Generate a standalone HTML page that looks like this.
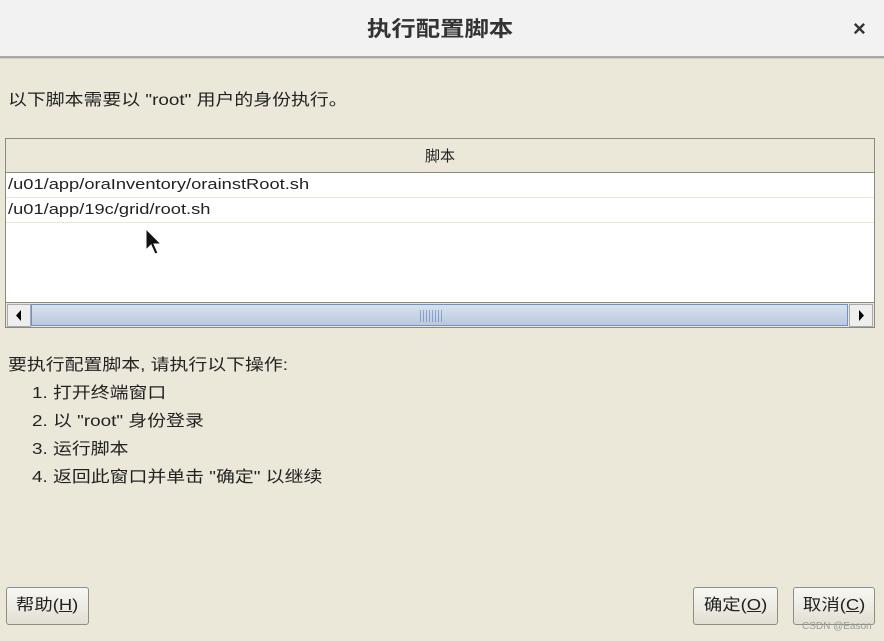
<!DOCTYPE html>
<html><head><meta charset="utf-8"><style>
body{margin:0;width:884px;height:641px;background:#ebe8da;font-family:"Liberation Sans","Noto Sans CJK SC",sans-serif;position:relative;overflow:hidden;color:#222}
.title{position:absolute;left:0;top:0;width:884px;height:56px;background:#f2f2f2;border-bottom:2px solid #a8a8a0;box-shadow:0 1px 0 #d0d0c8}
.title span{position:absolute;left:367px;top:13px;font-size:21px;font-weight:bold;color:#333;transform:scaleX(1.16);transform-origin:left;white-space:nowrap}
.x{position:absolute;left:853px;top:16px;font-size:22px;font-weight:bold;color:#333}
.t{position:absolute;font-size:16px;color:#222;white-space:nowrap;transform:scaleX(1.18);transform-origin:left}
.tbl{position:absolute;left:5px;top:138px;width:868px;height:188px;border:1px solid #8a8a84;background:#fff}
.hd{height:33px;background:#ebe8da;border-bottom:1px solid #8a8a84;text-align:center;font-size:15px;line-height:36px}
.row{height:24px;border-bottom:1px solid #ece8d0;font-size:15px;line-height:24px;padding-left:2px}
.row span{display:inline-block;transform:scaleX(1.22);transform-origin:left}
.sb{position:absolute;left:0;bottom:0;width:868px;height:24px;background:#ebe8da;border-top:1px solid #8a8a84}
.sb .l,.sb .r{position:absolute;top:1px;width:22px;height:21px;background:#eee;border:1px solid #aaa}
.sb .l{left:1px}.sb .r{right:1px}
.thumb{position:absolute;left:25px;right:26px;top:1px;height:20px;background:linear-gradient(#d8e2ee,#b9c9dc);border:1px solid #6d91c8}
.grip{position:absolute;left:388px;top:5px;width:22px;height:12px;background:repeating-linear-gradient(90deg,#5a7fc0 0 1px,transparent 1px 3px);opacity:.6}
.btn{position:absolute;top:587px;height:36px;border:1px solid #8e8e86;border-radius:3px;background:linear-gradient(#f8f8f4,#e2dfd2);font-size:16px;line-height:36px;text-align:center}
.btn span{display:inline-block;transform:scaleX(1.15)}
</style></head><body>
<div class="title"><span>执行配置脚本</span><div class="x">×</div></div>
<div class="t" style="left:8px;top:86px">以下脚本需要以 "root" 用户的身份执行。</div>
<div class="tbl">
<div class="hd">脚本</div>
<div class="row"><span>/u01/app/oraInventory/orainstRoot.sh</span></div>
<div class="row"><span>/u01/app/19c/grid/root.sh</span></div>
<div class="sb"><div class="l"><svg width="22" height="21"><path d="M13 5L8 10.5L13 16Z" fill="#000"/></svg></div><div class="thumb"><div class="grip"></div></div><div class="r"><svg width="22" height="21"><path d="M9 5L14 10.5L9 16Z" fill="#000"/></svg></div></div>
</div>
<svg style="position:absolute;left:144px;top:228px" width="20" height="30"><path d="M2 1L2 22L7 17L11 26L14 25L10 16L17 16Z" fill="#111" stroke="#fff" stroke-width="1"/></svg>
<div class="t" style="left:8px;top:351px">要执行配置脚本, 请执行以下操作:</div>
<div class="t" style="left:32px;top:379px">1. 打开终端窗口</div>
<div class="t" style="left:32px;top:407px">2. 以 "root" 身份登录</div>
<div class="t" style="left:32px;top:435px">3. 运行脚本</div>
<div class="t" style="left:32px;top:463px">4. 返回此窗口并单击 "确定" 以继续</div>
<div class="btn" style="left:6px;width:81px"><span>帮助(<u>H</u>)</span></div>
<div class="btn" style="left:693px;width:83px"><span>确定(<u>O</u>)</span></div>
<div class="btn" style="left:793px;width:80px"><span>取消(<u>C</u>)</span></div>
<div style="position:absolute;left:802px;top:621px;font-size:10px;color:#999">CSDN @Eason</div>
</body></html>
